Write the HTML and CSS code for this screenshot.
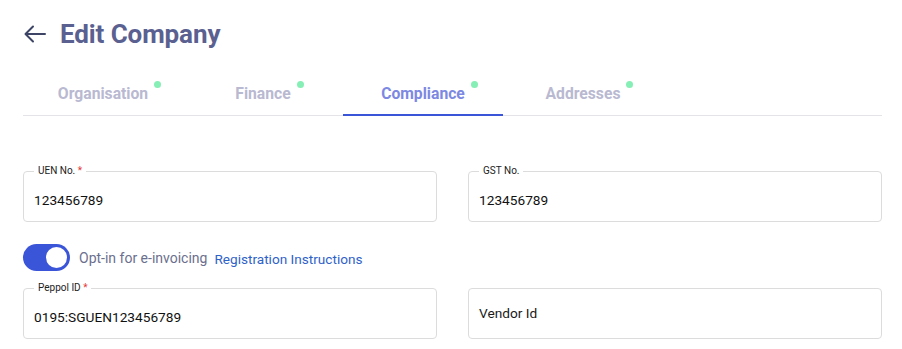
FILE: index.html
```html
<!DOCTYPE html>
<html>
<head>
<meta charset="utf-8">
<link rel="stylesheet" href="styles.css">
</head>
<body>
<div class="page">
  <header class="header">
    <svg class="back" width="22" height="18" viewBox="0 0 22 18" fill="none" stroke="#3d4466" stroke-width="2" stroke-linecap="round" stroke-linejoin="round">
      <path d="M21 9H2M9 1.5L1.5 9L9 16.5"/>
    </svg>
    <h1 class="title">Edit Company</h1>
  </header>
  <nav class="tabs">
    <div class="tab"><span class="tab-label">Organisation<span class="dot"></span></span></div>
    <div class="tab"><span class="tab-label">Finance<span class="dot"></span></span></div>
    <div class="tab active"><span class="tab-label">Compliance<span class="dot"></span></span></div>
    <div class="tab"><span class="tab-label">Addresses<span class="dot"></span></span></div>
  </nav>
  <form class="form">
    <fieldset class="field">
      <legend class="legend">UEN No. <span class="req">*</span></legend>
      <div class="value">123456789</div>
    </fieldset>
    <fieldset class="field">
      <legend class="legend">GST No.</legend>
      <div class="value">123456789</div>
    </fieldset>
    <div class="toggle-row">
      <span class="switch"><span class="knob"></span></span>
      <span class="toggle-text">Opt-in for e-invoicing</span>
      <a class="link">Registration Instructions</a>
    </div>
    <div class="spacer"></div>
    <fieldset class="field">
      <legend class="legend">Peppol ID <span class="req">*</span></legend>
      <div class="value">0195:SGUEN123456789</div>
    </fieldset>
    <fieldset class="field no-legend">
      <div class="value placeholder">Vendor Id</div>
    </fieldset>
  </form>
</div>
</body>
</html>
```
FILE: styles.css
```css
* { box-sizing: border-box; }
html, body { margin: 0; padding: 0; background: #fff; }
body { font-family: Roboto, "Noto Sans", Arial, sans-serif; }
.page { padding: 18px 20px 0 23px; width: 902px; }
.header { display: flex; align-items: center; height: 32px; }
.back { margin-left: 1px; margin-right: 14px; }
.title { margin: 0; font-size: 26px; font-weight: 700; color: #5a6190; letter-spacing: -0.1px; }
.tabs { display: flex; margin-top: 20px; border-bottom: 1px solid #e3e3e8; height: 46px; }
.tab { width: 160px; display: flex; justify-content: center; align-items: center; font-size: 15.7px; font-weight: 700; color: #b9b9d1; position: relative; padding-top: 1px; }
.tab.active { color: #7c88e2; }
.tab.active::after { content: ""; position: absolute; left: 0; right: 0; bottom: -1px; height: 2px; background: #3b55d9; }
.tab-label { position: relative; }
.dot { position: absolute; right: -13px; top: -3px; width: 7px; height: 7px; border-radius: 50%; background: #86efb5; }
.form { display: grid; grid-template-columns: 414px 414px; column-gap: 31px; margin-top: 50px; }
.field { margin: 0; padding: 0 10px 0 10px; border: 1px solid #dcdcdc; border-radius: 4px; height: 56px; position: relative; min-width: 0; }
.legend { font-size: 10px; color: #222; padding: 0 4px; line-height: 10px; margin-left: 0; }
.req { color: #e53935; }
.value { font-size: 13.7px; color: #111; padding-top: 15px; line-height: 18px; }
.no-legend { height: 51px; margin-top: 5px; }
.no-legend .value { padding-top: 15px; }
.placeholder { color: #1a1a1a; }
.toggle-row { display: flex; align-items: center; height: 27px; margin-top: 22px; margin-bottom: 12px; }
.spacer { height: 27px; margin-top: 22px; }
.switch { width: 47px; height: 27px; border-radius: 14px; background: #3b55d9; display: flex; align-items: center; justify-content: flex-end; padding-right: 3px; flex-shrink: 0; }
.knob { width: 21px; height: 21px; border-radius: 50%; background: #fff; }
.toggle-text { font-size: 14px; color: #6b6f8e; margin-left: 9px; }
.link { font-size: 13.6px; color: #2f62c9; margin-left: 7px; margin-top: 2px; text-decoration: none; }
```
